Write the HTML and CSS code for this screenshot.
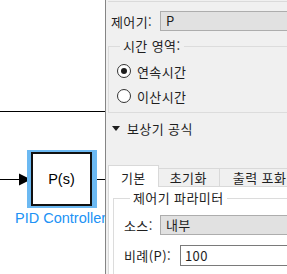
FILE: index.html
```html
<!DOCTYPE html>
<html lang="ko">
<head>
  <meta charset="UTF-8">
  <meta name="viewport" content="width=device-width, initial-scale=1.0">
  <title>PID Controller</title>
  <link rel="stylesheet" href="styles.css">
</head>
<body>
  <!-- 모델 캔버스 -->
  <div class="canvas">
    <svg class="wires" width="105" height="274" viewBox="0 0 105 274">
      <line x1="0" y1="111.5" x2="105" y2="111.5" stroke="#000" stroke-width="1"/>
      <line x1="0" y1="179.5" x2="20" y2="179.5" stroke="#000" stroke-width="1"/>
      <polygon points="19,173.5 31,179.5 19,185.5" fill="#000"/>
      <line x1="92" y1="179.5" x2="105" y2="179.5" stroke="#000" stroke-width="1"/>
    </svg>
    <div class="block">
      <div class="block-box">P(s)</div>
    </div>
    <div class="block-name">PID Controller</div>
  </div>

  <!-- 블록 파라미터 대화상자 -->
  <div class="dialog">
    <div class="dialog-body">
      <div class="top-line"></div>

      <div class="row ctrl-row">
        <span class="label w49">제어기:</span>
        <div class="select">P</div>
      </div>

      <fieldset class="group time-group">
        <legend>시간 영역:</legend>
        <div class="radio-row">
          <span class="radio checked"></span>
          <span>연속시간</span>
        </div>
        <div class="radio-row">
          <span class="radio"></span>
          <span>이산시간</span>
        </div>
      </fieldset>

      <div class="expander">
        <span class="caret"></span>
        <span>보상기 공식</span>
      </div>

      <div class="tabs">
        <div class="tab active">기본</div>
        <div class="tab">초기화</div>
        <div class="tab third">출력 포화</div>
      </div>

      <div class="pane">
        <fieldset class="group param-group">
          <legend>제어기 파라미터</legend>
          <div class="row">
            <span class="label w36">소스:</span>
            <div class="select">내부</div>
          </div>
          <div class="row">
            <span class="label w56">비례(P):</span>
            <div class="input">100</div>
          </div>
        </fieldset>
      </div>
    </div>
  </div>
</body>
</html>
```

FILE: styles.css
```css
html, body {
  margin: 0;
  height: 274px;
  overflow: hidden;
}

body {
  display: flex;
  background: #fff;
  font-family: "Noto Sans CJK KR", "Noto Sans", sans-serif;
  font-size: 13px;
  color: #1e1e1e;
}

/* 캔버스 */
.canvas {
  position: relative;
  flex: none;
  width: 105px;
  overflow: hidden;
  background: #fff;
}

.wires {
  position: absolute;
  top: 0;
  left: 0;
}

.block {
  position: absolute;
  left: 27px;
  top: 150px;
  width: 70px;
  height: 58px;
  background: #6cb9f2;
}

.block-box {
  box-sizing: border-box;
  margin: 2px 0 0 4px;
  width: 61px;
  height: 54px;
  border: 2px solid #111;
  background: #fff;
  display: flex;
  align-items: center;
  justify-content: center;
  font-family: "Liberation Sans", Arial, sans-serif;
  font-size: 14.5px;
  color: #000;
}

.block-name {
  position: absolute;
  left: 15px;
  top: 210px;
  white-space: nowrap;
  font-family: "Liberation Sans", Arial, sans-serif;
  font-size: 14.5px;
  line-height: 17px;
  color: #2092f5;
}

/* 대화상자 */
.dialog {
  flex: 1;
  min-width: 0;
  height: 274px;
  overflow: hidden;
  border-left: 1px solid #858585;
  background: #f0f0f0;
  box-shadow: -3px 0 6px rgba(0, 0, 0, 0.22);
}

.dialog-body {
  width: 300px;
  padding-left: 2px;
  letter-spacing: 0.4px;
}

.top-line {
  height: 1px;
  margin-top: 1px;
  background: #dadada;
}

.row {
  display: flex;
  align-items: center;
  height: 20px;
}

.ctrl-row {
  margin-top: 9px;
}

.label {
  flex: none;
  white-space: nowrap;
}

.ctrl-row .label {
  padding-left: 3px;
}

.w49 { width: 49px; }
.w36 { width: 36px; }
.w56 { width: 56px; }

.select {
  flex: 1;
  box-sizing: border-box;
  height: 20px;
  line-height: 18px;
  border: 1px solid #adadad;
  background: #e1e1e1;
  padding-left: 5px;
}

.input {
  flex: 1;
  box-sizing: border-box;
  height: 21px;
  line-height: 19px;
  border: 1px solid #7a7a7a;
  background: #fff;
  padding-left: 4px;
}

.group {
  margin: 0;
  min-width: 0;
  border: 1px solid #dcdcdc;
}

.group legend {
  line-height: 16px;
  padding: 0 3px;
}

.time-group {
  margin-top: 7px;
  padding: 7px 0 6px 8px;
}

.time-group legend {
  margin-left: 3px;
}

.radio-row {
  display: flex;
  align-items: center;
  gap: 6px;
  height: 20px;
}

.radio-row + .radio-row {
  margin-top: 5px;
}

.radio {
  box-sizing: border-box;
  width: 14px;
  height: 14px;
  border: 1px solid #333;
  border-radius: 50%;
  background: #fff;
  display: flex;
  align-items: center;
  justify-content: center;
}

.radio.checked::after {
  content: "";
  width: 6px;
  height: 6px;
  border-radius: 50%;
  background: #1e1e1e;
}

.expander {
  display: flex;
  align-items: center;
  gap: 7px;
  height: 20px;
  margin-top: 5px;
  padding-left: 4px;
}

.caret {
  width: 0;
  height: 0;
  border-left: 4px solid transparent;
  border-right: 4px solid transparent;
  border-top: 5px solid #1e1e1e;
}

/* 탭 */
.tabs {
  display: flex;
  align-items: flex-end;
  margin-top: 27px;
  border-bottom: 1px solid #d9d9d9;
}

.tab {
  height: 17px;
  line-height: 17px;
  border-top: 1px solid #d9d9d9;
  border-right: 1px solid #d9d9d9;
  padding: 0 12px 0 11px;
  white-space: nowrap;
}

.tab.active {
  height: 21px;
  line-height: 24px;
  border-left: 1px solid #d9d9d9;
  padding: 0 12px;
  margin-bottom: -1px;
  background: #fff;
}

.tab.third {
  padding-left: 13px;
}

.pane {
  height: 86px;
  background: #fff;
  border-left: 1px solid #d9d9d9;
  padding: 3px 0 0 4px;
}

.param-group {
  padding: 9px 0 0 10px;
  height: 90px;
}

.param-group legend {
  margin-left: 6px;
}

.param-group .row + .row {
  margin-top: 10px;
  height: 21px;
}
```
